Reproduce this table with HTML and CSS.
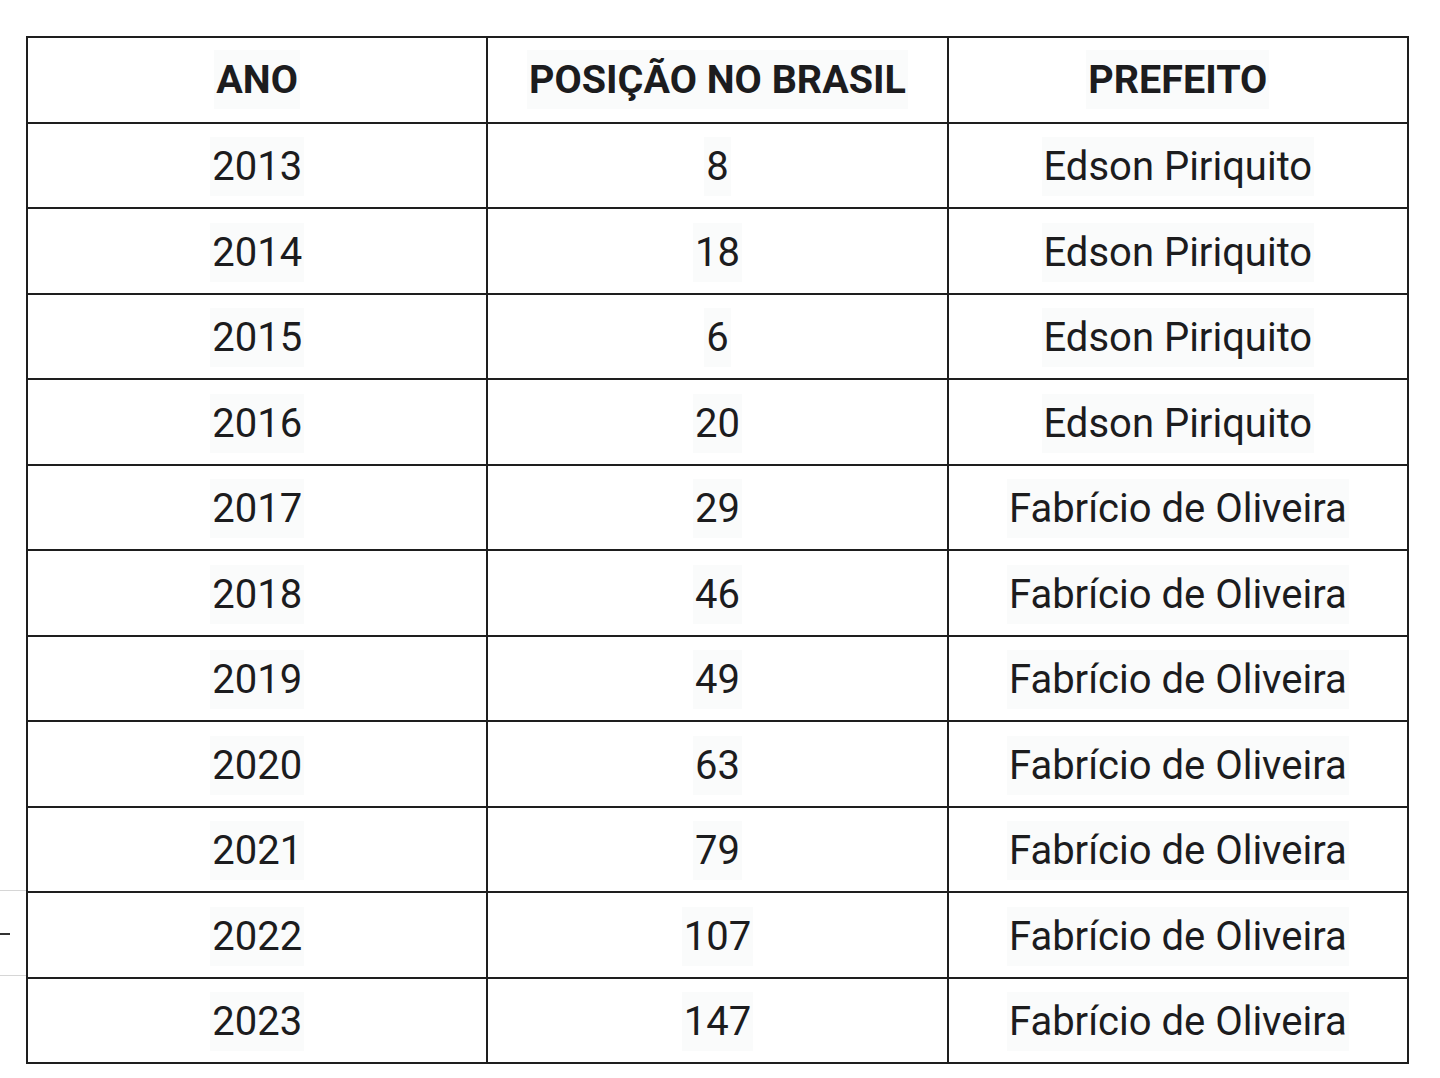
FILE: index.html
```html
<!DOCTYPE html>
<html lang="pt-BR">
<head>
<meta charset="utf-8">
<title>Tabela</title>
<link rel="stylesheet" href="styles.css">
</head>
<body>
<div class="page">
  <div class="side-mark">
    <span class="side-line top"></span>
    <span class="side-dash"></span>
    <span class="side-line bottom"></span>
  </div>
  <table class="ranking">
    <thead>
      <tr><th><span>ANO</span></th><th><span>POSIÇÃO NO BRASIL</span></th><th><span>PREFEITO</span></th></tr>
    </thead>
    <tbody>
      <tr><td><span>2013</span></td><td><span>8</span></td><td><span>Edson Piriquito</span></td></tr>
      <tr><td><span>2014</span></td><td><span>18</span></td><td><span>Edson Piriquito</span></td></tr>
      <tr><td><span>2015</span></td><td><span>6</span></td><td><span>Edson Piriquito</span></td></tr>
      <tr><td><span>2016</span></td><td><span>20</span></td><td><span>Edson Piriquito</span></td></tr>
      <tr><td><span>2017</span></td><td><span>29</span></td><td><span>Fabrício de Oliveira</span></td></tr>
      <tr><td><span>2018</span></td><td><span>46</span></td><td><span>Fabrício de Oliveira</span></td></tr>
      <tr><td><span>2019</span></td><td><span>49</span></td><td><span>Fabrício de Oliveira</span></td></tr>
      <tr><td><span>2020</span></td><td><span>63</span></td><td><span>Fabrício de Oliveira</span></td></tr>
      <tr><td><span>2021</span></td><td><span>79</span></td><td><span>Fabrício de Oliveira</span></td></tr>
      <tr><td><span>2022</span></td><td><span>107</span></td><td><span>Fabrício de Oliveira</span></td></tr>
      <tr><td><span>2023</span></td><td><span>147</span></td><td><span>Fabrício de Oliveira</span></td></tr>
    </tbody>
  </table>
</div>
</body>
</html>
```
FILE: styles.css
```css
html, body {
  margin: 0;
  padding: 0;
  background: #ffffff;
}
.page {
  position: relative;
  padding: 36px 0 0 26px;
  width: 1382px;
}
.ranking {
  border-collapse: collapse;
  width: 1383px;
  table-layout: fixed;
  font-family: Roboto, "Noto Sans", sans-serif;
  color: #1c1c1e;
}
.ranking tr {
  height: 85.5px;
}
.ranking th,
.ranking td {
  border: 2px solid #1e1e1e;
  padding: 0;
  text-align: center;
  vertical-align: middle;
  font-size: 40px;
  line-height: 48px;
}
.ranking th {
  font-weight: 700;
  font-size: 39.5px;
}
.ranking td {
  font-weight: 400;
}
.ranking span {
  background: #fafbfb;
  padding: 6px 2px;
}
.ranking td span {
  position: relative;
  top: 2px;
}
.side-mark {
  position: absolute;
  left: 0;
  top: 890px;
  width: 27px;
  height: 88px;
}
.side-line {
  position: absolute;
  left: 0;
  width: 26px;
  height: 1px;
  background: #d6d6d6;
}
.side-line.top { top: 0; }
.side-line.bottom { top: 85px; }
.side-dash {
  position: absolute;
  left: 0;
  top: 43px;
  width: 10px;
  height: 2px;
  background: #333;
}
```
